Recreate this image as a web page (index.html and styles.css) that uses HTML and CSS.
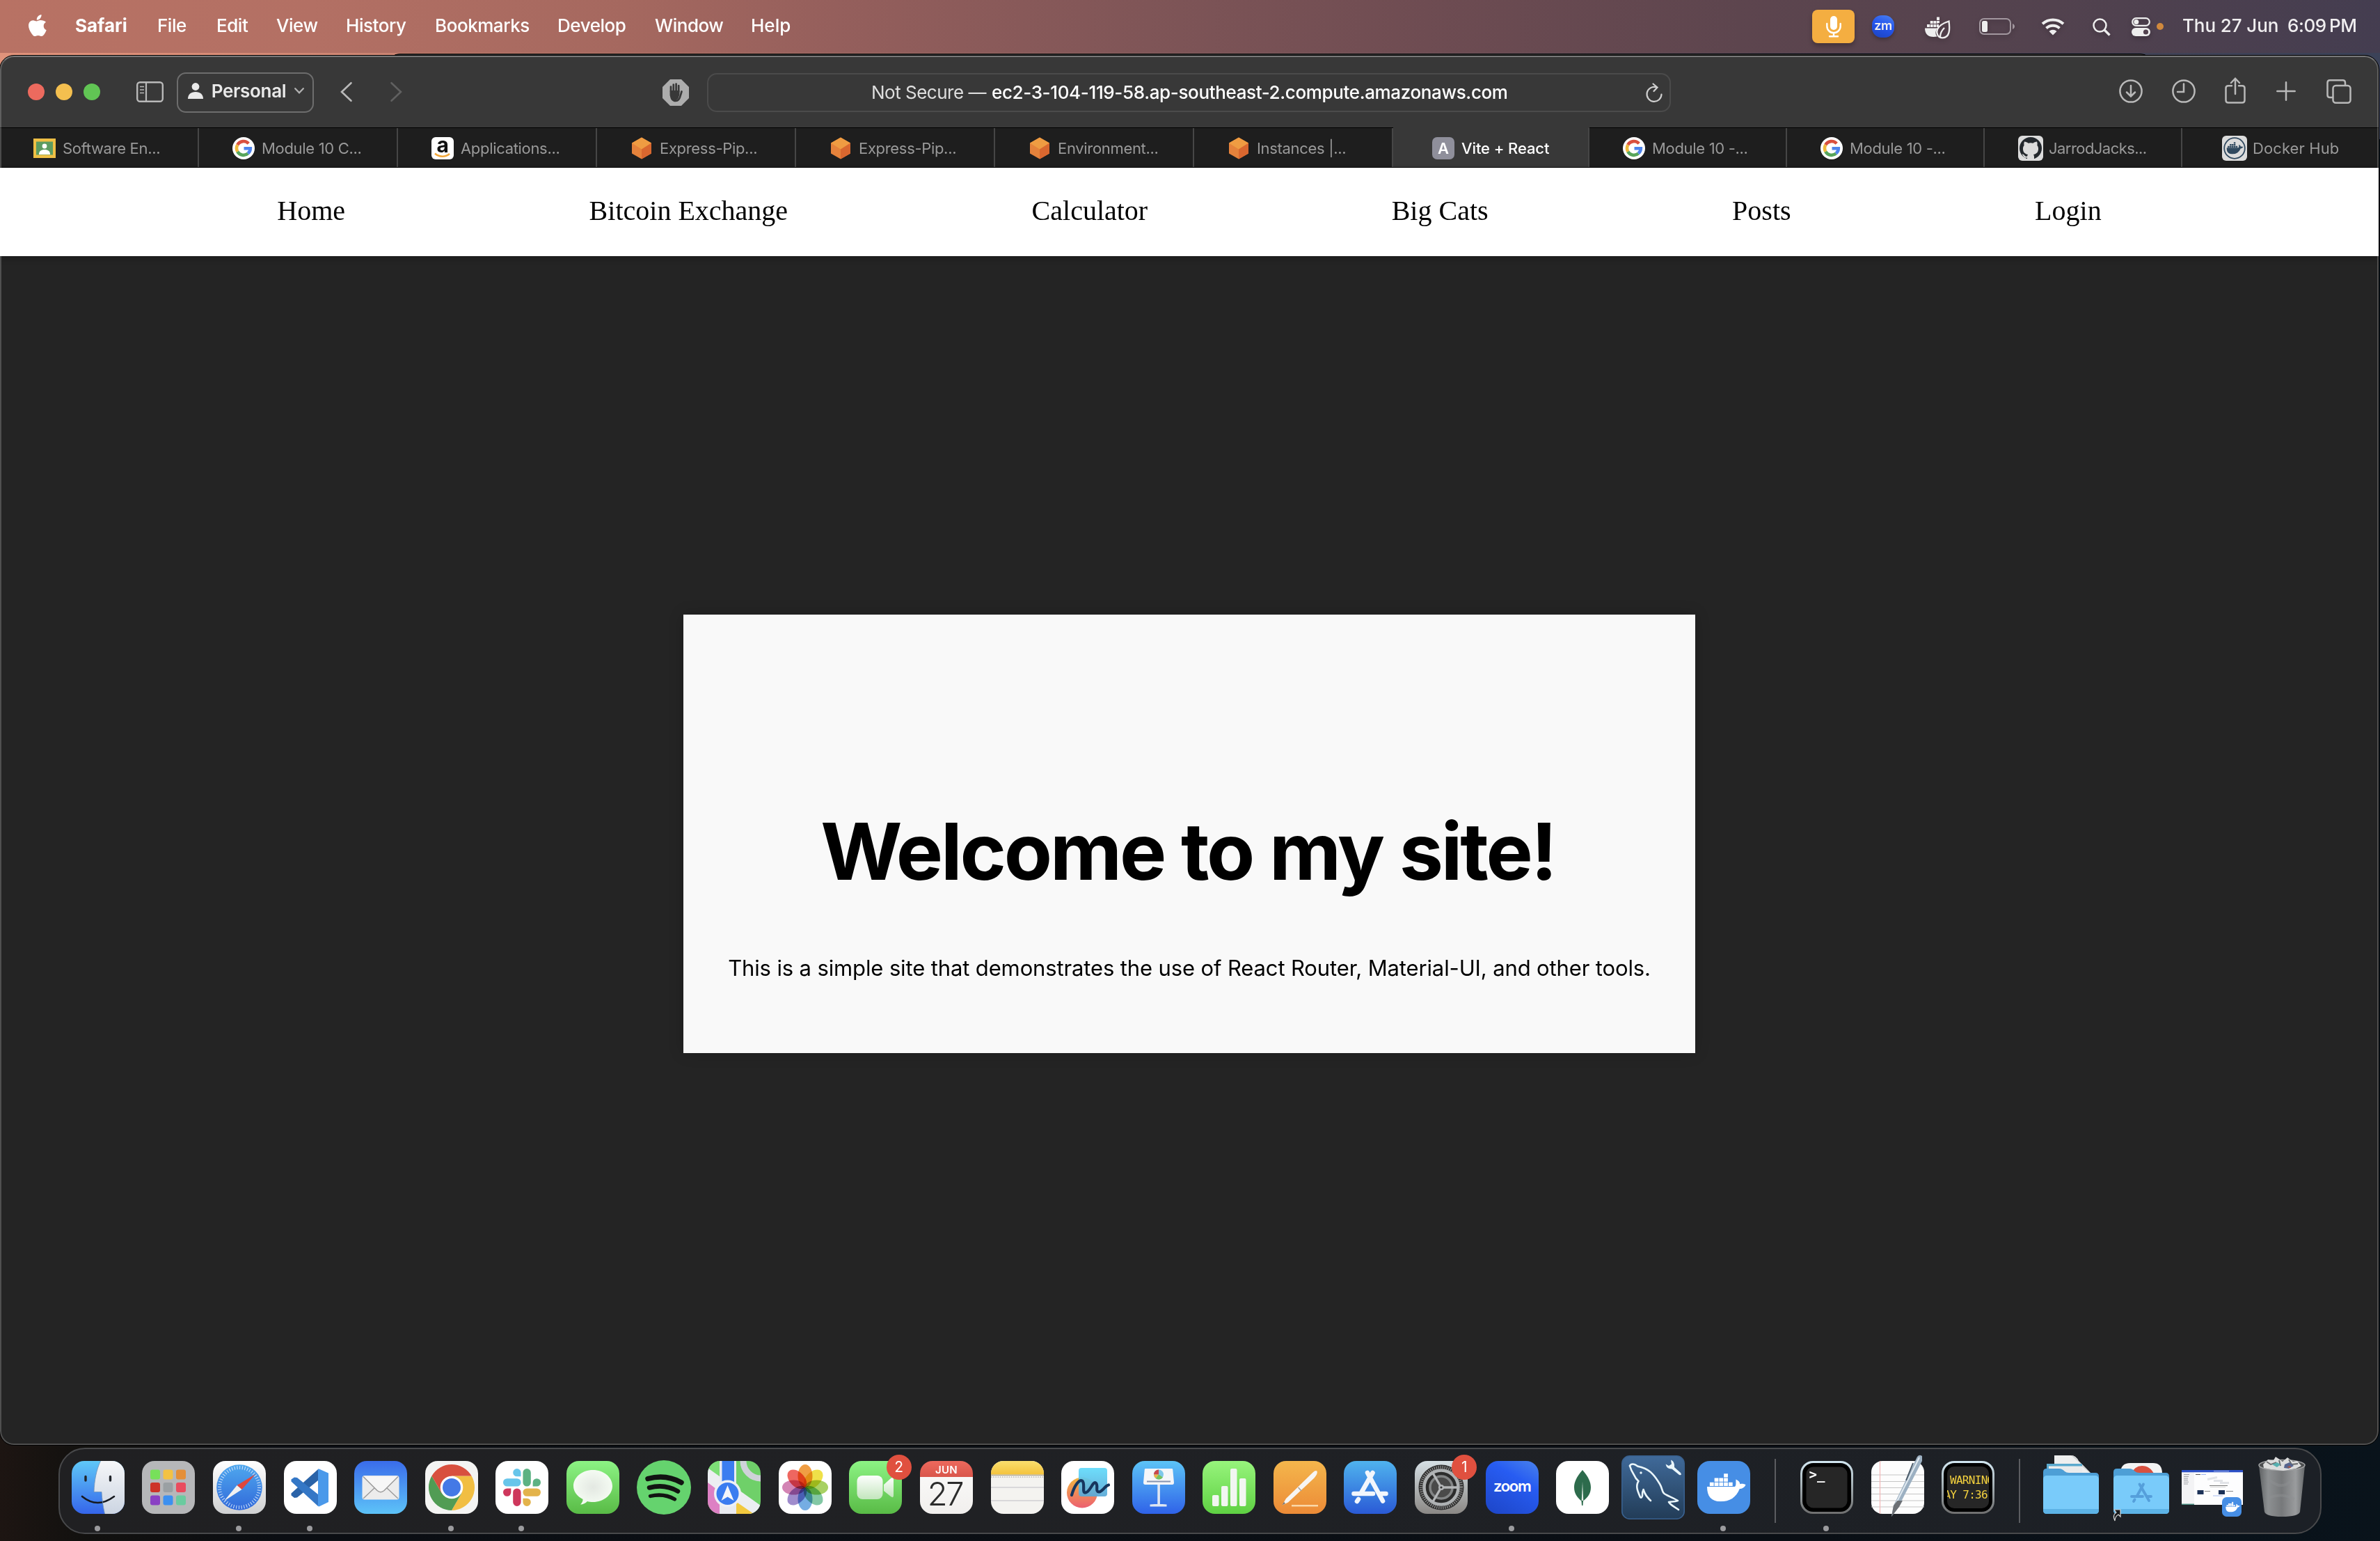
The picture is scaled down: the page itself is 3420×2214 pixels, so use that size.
FILE: index.html
```html
<!DOCTYPE html>
<html lang="en">
<head>
<meta charset="utf-8">
<title>Vite + React</title>
<link rel="stylesheet" href="styles.css">
</head>
<body>
<svg class="defs" width="0" height="0" aria-hidden="true">
  <defs>
    <symbol id="google" viewBox="0 0 32 32">
      <circle cx="16" cy="16" r="16" fill="#fff"/>
      <g fill="none" stroke-width="4.6">
        <path d="M23.2 9.2A9.9 9.9 0 0 0 7.3 11.2" stroke="#d9503f"/>
        <path d="M7.3 11.2A9.9 9.9 0 0 0 7.3 20.8" stroke="#f0b93d"/>
        <path d="M7.3 20.8A9.9 9.9 0 0 0 22.3 23.6" stroke="#57a55b"/>
        <path d="M22.3 23.6A9.9 9.9 0 0 0 25.8 16.2H16.5" stroke="#4e84ec"/>
      </g>
    </symbol>
    <symbol id="cube" viewBox="0 0 32 32">
      <path d="M16 0.5 30 8.5 V23.5 L16 31.5 2 23.5 V8.5Z" fill="#e5823b"/>
      <path d="M16 0.5 30 8.5 16 17.5 2 8.5Z" fill="#ef9c42"/>
      <path d="M16 17.5 30 8.5 V23.5 L16 31.5Z" fill="#d9672f"/>
    </symbol>
    <symbol id="whale" viewBox="0 0 58 42">
      <path d="M0 20H41C44 18.500 42.500 13 43 9C47 11 49 13 49 16C52 15 55 15.500 57.500 17C56 21 52 23 48.500 23C43 36 34 42 20 42C6 42 0 34 0 20Z"/>
      <path d="M4 13.500h6v5.500h-6zM11 13.500h6v5.500h-6zM18 13.500h6v5.500h-6zM25 13.500h6v5.500h-6zM32 13.500h6v5.500h-6zM11 7h6v5.500h-6zM18 7h6v5.500h-6zM25 7h6v5.500h-6zM25 0.500h6v5.500h-6z"/>
    </symbol>
    <linearGradient id="gFinder" x1="0" y1="0" x2="0" y2="1"><stop offset="0" stop-color="#5fc8f8"/><stop offset="1" stop-color="#3565ea"/></linearGradient>
    <linearGradient id="gFace" x1="0" y1="0" x2="0" y2="1"><stop offset="0" stop-color="#f5f6f8"/><stop offset="1" stop-color="#ccd5e2"/></linearGradient>
    <linearGradient id="gPaper" x1="0" y1="0" x2="0" y2="1"><stop offset="0" stop-color="#fff"/><stop offset="1" stop-color="#cfd0d1"/></linearGradient>
    <linearGradient id="gCompass" x1="0" y1="0" x2="0" y2="1"><stop offset="0" stop-color="#4fa8ee"/><stop offset="1" stop-color="#3169da"/></linearGradient>
    <linearGradient id="gSilver" x1="0" y1="0" x2="0" y2="1"><stop offset="0" stop-color="#e3e8ea"/><stop offset="1" stop-color="#707374"/></linearGradient>
    <linearGradient id="gMail" x1="0" y1="0" x2="0" y2="1"><stop offset="0" stop-color="#3a6cea"/><stop offset="1" stop-color="#5dc3f8"/></linearGradient>
    <linearGradient id="gSky" x1="0" y1="0" x2="0" y2="1"><stop offset="0" stop-color="#5cc4f7"/><stop offset="1" stop-color="#2f62e8"/></linearGradient>
    <linearGradient id="gStore" x1="0" y1="0" x2="0" y2="1"><stop offset="0" stop-color="#4fb3ee"/><stop offset="1" stop-color="#2a5ad6"/></linearGradient>
    <linearGradient id="gGreen" x1="0" y1="0" x2="0" y2="1"><stop offset="0" stop-color="#8cf384"/><stop offset="1" stop-color="#59bb46"/></linearGradient>
    <linearGradient id="gCamera" x1="0" y1="0" x2="0" y2="1"><stop offset="0" stop-color="#fdfefd"/><stop offset="1" stop-color="#c3e6bd"/></linearGradient>
    <radialGradient id="gBubble" cx=".5" cy=".5" r=".55"><stop offset="0" stop-color="#e3e8e2"/><stop offset="1" stop-color="#f6fdf4"/></radialGradient>
    <linearGradient id="gLime" x1="0" y1="0" x2="0" y2="1"><stop offset="0" stop-color="#97f47c"/><stop offset="1" stop-color="#5fd143"/></linearGradient>
    <linearGradient id="gOrange" x1="0" y1="0" x2="0" y2="1"><stop offset="0" stop-color="#f4b64c"/><stop offset="1" stop-color="#ec8b37"/></linearGradient>
    <linearGradient id="gYellow" x1="0" y1="0" x2="0" y2="1"><stop offset="0" stop-color="#fadf6e"/><stop offset="1" stop-color="#f4c33c"/></linearGradient>
    <linearGradient id="gSun" x1="0" y1="0" x2="0" y2="1"><stop offset="0" stop-color="#f3b63f"/><stop offset="1" stop-color="#ec6071"/></linearGradient>
    <linearGradient id="gCyan" x1="0" y1="0" x2="0" y2="1"><stop offset="0" stop-color="#62dbfb"/><stop offset="1" stop-color="#5ba8d6"/></linearGradient>
    <linearGradient id="gMetal" x1="0" y1="0" x2="0" y2="1"><stop offset="0" stop-color="#d6e0e5"/><stop offset="1" stop-color="#8b8885"/></linearGradient>
    <linearGradient id="gRim" x1="0" y1="0" x2="0" y2="1"><stop offset="0" stop-color="#d3e8f2"/><stop offset="1" stop-color="#6e6e6e"/></linearGradient>
    <linearGradient id="gSql" x1="0" y1="0" x2="0" y2="1"><stop offset="0" stop-color="#406a9a"/><stop offset="1" stop-color="#223c57"/></linearGradient>
    <linearGradient id="gCan" x1="0" y1="0" x2="1" y2="0"><stop offset="0" stop-color="#5e6163"/><stop offset=".2" stop-color="#8d9092"/><stop offset=".5" stop-color="#77797b"/><stop offset=".8" stop-color="#9a9c9e"/><stop offset="1" stop-color="#66696b"/></linearGradient>
    <clipPath id="tile"><rect width="76" height="76" rx="18"/></clipPath>
    <clipPath id="pane"><rect x="8" y="8" width="60" height="60" rx="10"/></clipPath>
  </defs>
</svg>

<div class="back-window"></div>

<header class="menubar">
  <svg class="apple" viewBox="0 0 26 31"><path fill="#fff" d="M18.500 0c.3 2.100-.6 4-1.800 5.400-1.200 1.400-3.100 2.400-4.900 2.200-.3-2 .7-4 1.800-5.200C14.800 1 16.900.1 18.500 0zM25 10.800c-2.400 1.500-3.300 3.500-3.300 5.700 0 2.600 1.500 4.800 4 5.800-.6 1.900-1.600 3.800-2.800 5.500-1.200 1.700-2.400 3.200-4.200 3.200-1.900 0-2.500-1.100-4.900-1.100-2.300 0-3.100 1.100-4.900 1.100S6 29.500 4.600 27.600C1.500 23.300 0 18.700 0 15.800 0 11 3.100 8.200 6.500 8.200c2 0 3.700 1.300 4.900 1.300 1.200 0 3.200-1.400 5.700-1.400 3.300 0 6.100 1 7.900 2.700z"/></svg>
  <nav class="menus">
    <span class="menu menu-app">Safari</span>
    <span class="menu">File</span>
    <span class="menu">Edit</span>
    <span class="menu">View</span>
    <span class="menu">History</span>
    <span class="menu">Bookmarks</span>
    <span class="menu">Develop</span>
    <span class="menu">Window</span>
    <span class="menu menu-help">Help</span>
  </nav>
  <div class="status">
    <span class="mic"><svg viewBox="0 0 22 31" width="22" height="31"><rect x="6" y="0" width="10" height="20" rx="5" fill="#fff"/><path d="M1.300 11v3.500a9.700 9.700 0 0 0 19.400 0V11M11 24.500V29M5 29.300h12" fill="none" stroke="#fff" stroke-width="2.400" stroke-linecap="round"/></svg></span>
    <span class="zm">zm</span>
    <svg class="shade st-docker" viewBox="0 0 36 32" width="36" height="32"><path fill="#eee" d="M3 11h4v4H3zM7.700 11h4v4h-4zM12.400 11h4v4h-4zM17 11h3v4h-3zM7.700 6h4v4h-4zM12.400 6h4v4h-4zM17 6h4v3l-4 1zM17 .5h4v4.500h-4zM0 16.500h18C15 20 14.500 25 17.500 28.500 6 30.500 0 26 0 16.500z"/><path d="M34.500 6.500C36 18 36 30 25.500 30.300 18 30 16 23 18 18c2.500-6 9-9 16.500-11.500zM22 29c0-5 2-9 6-13" fill="none" stroke="#eee" stroke-width="2.300"/></svg>
    <svg class="shade st-battery" viewBox="0 0 52 24" width="52" height="24"><rect x="1" y="1" width="44" height="22" rx="6" fill="none" stroke="#a2979f" stroke-width="2"/><rect x="4" y="4" width="8" height="16" rx="2.500" fill="#eee"/><path d="M48 8c4 1.500 4 6.500 0 8z" fill="#a2979f"/></svg>
    <svg class="shade st-wifi" viewBox="0 0 34 26" width="34" height="26"><path d="M2 9.300a22 22 0 0 1 30 0M7.500 15.500a14 14 0 0 1 19 0" fill="none" stroke="#eee" stroke-width="4"/><path d="M11.500 20a8 8 0 0 1 11 0L17 25.500z" fill="#eee"/></svg>
    <svg class="shade st-search" viewBox="0 0 26 26" width="26" height="26"><circle cx="10.500" cy="10.500" r="9" fill="none" stroke="#eee" stroke-width="2.500"/><path d="M17 17l7.500 7.500" stroke="#eee" stroke-width="3.400"/></svg>
    <svg class="shade st-control" viewBox="0 0 27 27" width="27" height="27"><rect x="1.200" y="1.200" width="24.600" height="10.600" rx="5.300" fill="none" stroke="#eee" stroke-width="2.200"/><circle cx="6.800" cy="6.500" r="3.500" fill="#eee"/><rect y="15" width="27" height="12" rx="6" fill="#eee"/><circle cx="20.500" cy="21" r="3.600" fill="#52424e"/></svg>
    <span class="rec"></span>
    <span class="clock"><span class="date">Thu 27 Jun</span><span class="time">6:09&#8201;PM</span></span>
  </div>
</header>

<main class="window">
  <div class="toolbar">
    <div class="lights"><i class="light close"></i><i class="light min"></i><i class="light max"></i></div>
    <svg class="sidebar-icon" viewBox="0 0 39 30" width="39" height="30" fill="none" stroke="#b9b9b9"><rect x="1.200" y="1.200" width="36.600" height="27.600" rx="4" stroke-width="2.400"/><path d="M14 1v28" stroke-width="2.200"/><path d="M5 7.500h6M5 12h6M5 16.500h6" stroke-width="1.600"/></svg>
    <button class="profile">
      <svg viewBox="0 0 22 23" width="22" height="23" fill="#e9e9e9"><circle cx="11" cy="5.500" r="5.400"/><path d="M0 23C0 16.500 4.500 13 11 13s11 3.500 11 10z"/></svg>
      <span class="profile-name">Personal</span>
      <svg viewBox="0 0 14 9" width="14" height="9"><path d="M1.200 1.200 7 7.400l5.800-6.200" fill="none" stroke="#b0b0b0" stroke-width="2.300" stroke-linecap="round"/></svg>
    </button>
    <svg class="back" viewBox="0 0 17 28" width="17" height="28"><path d="M15.500 1.200 2 14l13.500 12.800" fill="none" stroke="#b9b9b9" stroke-width="2.600" stroke-linecap="round"/></svg>
    <svg class="forward" viewBox="0 0 17 28" width="17" height="28"><path d="M1.500 1.200 15 14 1.500 26.800" fill="none" stroke="#606060" stroke-width="2.600" stroke-linecap="round"/></svg>
    <svg class="blocker" viewBox="0 0 38 38" width="38" height="38"><path d="M11 0h16l11 11v16L27 38H11L0 27V11z" fill="#adadad"/><path d="M12 19v-8.500M15.800 17V7.500M19.600 17V6.500M23.200 18V9M12 20c0 7 2 11 7 11 4.500 0 6-4 7-8.500l1.500-5" fill="none" stroke="#383838" stroke-width="2.700" stroke-linecap="round"/><path d="M10.800 16h13.600v6l-2 6-4 3-5-1.500-2.600-6z" fill="#383838"/></svg>
    <div class="address">
      <span class="insecure">Not Secure —</span><span class="host">ec2-3-104-119-58.ap-southeast-2.compute.amazonaws.com</span>
      <svg class="reload" viewBox="0 0 24 28" width="24" height="28" fill="none" stroke="#cfcfcf" stroke-width="2.200" stroke-linecap="round"><path d="M22.500 16.500A10.500 10.500 0 1 1 15 6.300M10.500 1.500l6 5-5 5.500"/></svg>
    </div>
    <div class="actions">
      <svg viewBox="0 0 34 34" width="34" height="34"><circle cx="17" cy="17" r="15.600"/><path d="M17 9v15M11 18.500l6 6 6-6"/></svg>
      <svg class="a-history" viewBox="0 0 34 34" width="34" height="34"><circle cx="17" cy="17" r="15.600"/><path d="M17 6.500V18H8"/></svg>
      <svg class="a-share" viewBox="0 0 30 38" width="30" height="38"><path d="M10 12.200H5Q1.500 12.200 1.500 15.500V33Q1.500 36.500 5 36.500H25Q28.500 36.500 28.500 33V15.500Q28.500 12.200 25 12.200H20M15 24V2M9 8l6-6.300L21 8"/></svg>
      <svg class="a-plus" viewBox="0 0 28 28" width="28" height="28"><path d="M14 1.300v25.400M1.300 14h25.400"/></svg>
      <svg class="a-tabs" viewBox="0 0 36 35" width="36" height="35"><rect x="9.500" y="9" width="25" height="24.700" rx="4"/><path d="M9 26H5Q1.500 26 1.500 22.500V5Q1.500 1.300 5 1.300H23.500Q27 1.300 27 5V8.500"/></svg>
    </div>
  </div>

  <div class="tabs">
    <div class="tab"><svg class="fav" viewBox="0 0 32 32"><path fill="#eebf45" d="M0 2h32v28H0z"/><path fill="#5c9c61" d="M4 6.500h24v19H4z"/><circle cx="16" cy="13" r="3.400" fill="#fff"/><path d="M8 25c0-5 3-7 8-7s8 2 8 7z" fill="#fff"/></svg><span class="tt">Software En...</span></div>
    <div class="tab"><svg class="fav"><use href="#google"/></svg><span class="tt">Module 10 C...</span></div>
    <div class="tab"><span class="fav amazon">a<svg viewBox="0 0 26 8" width="26" height="8"><path d="M2 1.500C8 7 17 7 23 2" fill="none" stroke="#f3a83b" stroke-width="2.600"/></svg></span><span class="tt">Applications...</span></div>
    <div class="tab"><svg class="fav"><use href="#cube"/></svg><span class="tt">Express-Pip...</span></div>
    <div class="tab"><svg class="fav"><use href="#cube"/></svg><span class="tt">Express-Pip...</span></div>
    <div class="tab"><svg class="fav"><use href="#cube"/></svg><span class="tt">Environment...</span></div>
    <div class="tab"><svg class="fav"><use href="#cube"/></svg><span class="tt">Instances |...</span></div>
    <div class="tab active"><span class="fav letter">A</span><span class="tt">Vite + React</span></div>
    <div class="tab narrow"><svg class="fav"><use href="#google"/></svg><span class="tt">Module 10 -...</span></div>
    <div class="tab narrow"><svg class="fav"><use href="#google"/></svg><span class="tt">Module 10 -...</span></div>
    <div class="tab narrow big-icon"><svg class="fav" viewBox="0 0 36 36"><rect width="36" height="36" rx="6" fill="#dcdcdc"/><circle cx="18" cy="18" r="16" fill="#23282d"/><path fill="#dcdcdc" d="M9 8.500c2 0 4 1 5.500 2.200a18 18 0 0 1 7 0C23 9.500 25 8.500 27 8.500c.8 2 .8 4 .3 5.300 1.400 1.700 1.900 3.600 1.700 6-.4 4.600-3.200 6.600-7 7.200.7.800 1 2 1 3.500V35H13v-3.500c-3.500.6-5-1-6-3-.5-1-1-1.300-1.500-1.800 2-.6 3 .6 4 2 .9 1.200 2 1.300 3.600.8.1-1.100.5-2 1-2.500-3.800-.6-6.700-2.600-7.100-7.200-.2-2.400.3-4.300 1.700-6C8.200 12.500 8.200 10.500 9 8.500z"/></svg><span class="tt tight">JarrodJacks...</span></div>
    <div class="tab narrow big-icon last"><svg class="fav" viewBox="0 0 36 36"><rect width="36" height="36" rx="6" fill="#dcdcdc"/><circle cx="18" cy="18" r="14.800" fill="none" stroke="#30495f" stroke-width="1.800"/><svg x="6.500" y="9" width="24" height="17.500" fill="#30495f"><use href="#whale"/></svg></svg><span class="tt">Docker Hub</span></div>
  </div>

  <section class="page">
    <nav class="site-nav">
      <a>Home</a><a>Bitcoin Exchange</a><a>Calculator</a><a>Big Cats</a><a>Posts</a><a>Login</a>
    </nav>
    <div class="stage">
      <article class="card">
        <h1>Welcome to my site!</h1>
        <p>This is a simple site that demonstrates the use of React Router, Material-UI, and other tools.</p>
      </article>
    </div>
  </section>
</main>

<footer class="dock">
  <div class="slot running"><svg class="app" viewBox="0 0 76 76"><g clip-path="url(#tile)"><rect width="76" height="76" fill="url(#gFinder)"/><path d="M41.500 0H76V76H47.500C45 65 43.500 55 43 44.500H32C32.500 28 35.500 13 41.500 0Z" fill="url(#gFace)"/></g><path d="M20 22.500v5.500M55.500 22.500v5.500" stroke="#20242a" stroke-width="3.400" stroke-linecap="round"/><path d="M15 51Q37 69 61 51" fill="none" stroke="#161a20" stroke-width="2.600" stroke-linecap="round"/><path d="M41.500 0C35.500 13 32.500 28 32 44.500H43C43.500 55 45 65 47.500 76" fill="none" stroke="#6f93b8" stroke-width=".8"/></svg></div>
  <div class="slot"><svg class="app" viewBox="0 0 76 76"><rect width="76" height="76" rx="18" fill="#b6b7b9"/><rect x="12" y="12.500" width="14" height="14" rx="3" fill="#77e05a"/><rect x="30.500" y="12.500" width="14" height="14" rx="3" fill="#f3c244"/><rect x="49" y="12.500" width="14" height="14" rx="3" fill="#e48f38"/><rect x="12" y="31" width="14" height="14" rx="3" fill="#cd3328"/><rect x="30.500" y="31" width="14" height="14" rx="3" fill="#9aa0a3"/><rect x="49" y="31" width="14" height="14" rx="3" fill="#e94c5e"/><rect x="12" y="49.500" width="14" height="14" rx="3" fill="#8a41c4"/><rect x="30.500" y="49.500" width="14" height="14" rx="3" fill="#3c90f0"/><rect x="49" y="49.500" width="14" height="14" rx="3" fill="#6acb9f"/></svg></div>
  <div class="slot running"><svg class="app" viewBox="0 0 76 76"><rect width="76" height="76" rx="18" fill="url(#gPaper)"/><circle cx="38" cy="38" r="32.800" fill="url(#gCompass)"/><circle cx="38" cy="38" r="28.500" fill="none" stroke="#cfe3fa" stroke-width="5" stroke-dasharray="1 2.730"/><path d="M61 19 41.500 41 34.500 35Z" fill="#e0473d"/><path d="M16 57.500 34.500 35 41.500 41Z" fill="#f1f1f1"/></svg></div>
  <div class="slot running"><svg class="app" viewBox="0 0 76 76"><rect width="76" height="76" rx="18" fill="#fff"/><path d="M49 12 10.500 46.500V49.500L15 53 19 52.500 49 28Z" fill="#2a63a8"/><path d="M49 65 10.500 29.500V26.500L15 23.500 19 24 49 48Z" fill="#3477c6"/><path d="M49 11.500 50.500 11.500 64 17.500V59L50.500 65.500 49 65Z" fill="#4a99ea"/></svg></div>
  <div class="slot"><svg class="app" viewBox="0 0 76 76"><rect width="76" height="76" rx="18" fill="url(#gMail)"/><rect x="11.500" y="21" width="53" height="34.500" rx="3.500" fill="#ececec"/><path d="M13 54 30 38M63 54 46 38" stroke="#9c9c9c" stroke-width="1.400"/><path d="M13 22.500 33 42.500Q38 47 43 42.500L63 22.500" fill="#f7f7f7" stroke="#9a9a9a" stroke-width="1.500"/></svg></div>
  <div class="slot running"><svg class="app" viewBox="0 0 76 76"><rect width="76" height="76" rx="18" fill="#f4f4f3"/><path d="M66.600 21.500H38V38L52.300 46.200 38 71A33 33 0 0 0 66.600 21.500Z" fill="#f1be42"/><path d="M9.400 21.500 23.700 46.200 38 38 52.300 46.200 38 71A33 33 0 0 1 9.400 21.500Z" fill="#519c54"/><path d="M9.400 21.500A33 33 0 0 1 66.600 21.500H38V38L23.700 46.200Z" fill="#d8503f"/><circle cx="38" cy="38" r="16.300" fill="#fff"/><circle cx="38" cy="38" r="13" fill="#4479e6"/></svg></div>
  <div class="slot running"><svg class="app" viewBox="0 0 76 76"><rect width="76" height="76" rx="18" fill="#fff"/><g transform="translate(11 11) scale(2.250)"><path fill="#ce375c" d="M5.042 15.165a2.528 2.528 0 0 1-2.520 2.523A2.528 2.528 0 0 1 0 15.165a2.527 2.527 0 0 1 2.522-2.520h2.520v2.520zM6.313 15.165a2.527 2.527 0 0 1 2.521-2.520 2.527 2.527 0 0 1 2.521 2.520v6.313A2.528 2.528 0 0 1 8.834 24a2.528 2.528 0 0 1-2.521-2.522v-6.313z"/><path fill="#67c5ea" d="M8.834 5.042a2.528 2.528 0 0 1-2.521-2.520A2.528 2.528 0 0 1 8.834 0a2.528 2.528 0 0 1 2.521 2.522v2.520H8.834zM8.834 6.313a2.528 2.528 0 0 1 2.521 2.521 2.528 2.528 0 0 1-2.521 2.521H2.522A2.528 2.528 0 0 1 0 8.834a2.528 2.528 0 0 1 2.522-2.521h6.312z"/><path fill="#5cb283" d="M18.956 8.834a2.528 2.528 0 0 1 2.522-2.521A2.528 2.528 0 0 1 24 8.834a2.528 2.528 0 0 1-2.522 2.521h-2.522V8.834zM17.688 8.834a2.528 2.528 0 0 1-2.523 2.521 2.527 2.527 0 0 1-2.520-2.521V2.522A2.527 2.527 0 0 1 15.165 0a2.528 2.528 0 0 1 2.523 2.522v6.312z"/><path fill="#e3b34b" d="M15.165 18.956a2.528 2.528 0 0 1 2.523 2.522A2.528 2.528 0 0 1 15.165 24a2.527 2.527 0 0 1-2.520-2.522v-2.522h2.520zM15.165 17.688a2.527 2.527 0 0 1-2.520-2.523 2.526 2.526 0 0 1 2.520-2.520h6.313A2.527 2.527 0 0 1 24 15.165a2.528 2.528 0 0 1-2.522 2.523h-6.313z"/></g></svg></div>
  <div class="slot"><svg class="app" viewBox="0 0 76 76"><rect width="76" height="76" rx="18" fill="url(#gGreen)"/><path d="M38 13C53.500 13 66 23.300 66 36S53.500 59 38 59C35 59 32.500 58.700 30 58 27 61 24 62.300 20 62.500 22.500 60 23.700 57.500 23.500 55 15.500 51 10 44 10 36 10 23.300 22.500 13 38 13Z" fill="url(#gBubble)"/></svg></div>
  <div class="slot"><svg class="app spotify" viewBox="0 0 78 78"><circle cx="39" cy="39" r="39" fill="#65d36e"/><g fill="none" stroke="#121412" stroke-linecap="round"><path d="M16 26.500Q42 19.500 64 32" stroke-width="7.500"/><path d="M18 39.500Q40 33.500 59 44.500" stroke-width="6.500"/><path d="M19.500 51.500Q39 47 54.500 56" stroke-width="5.300"/></g></svg></div>
  <div class="slot"><svg class="app" viewBox="0 0 76 76"><g clip-path="url(#tile)"><rect width="76" height="76" fill="#6fd069"/><path d="M0 30 17 43V76H0Z" fill="#dd80c4"/><path d="M0 0H17V22L0 10Z" fill="#7ddf77"/><path d="M0 10 76 64V88L0 31Z" fill="#eceef2"/><path d="M40 58 66 76H40Z" fill="#f2c93f"/><path d="M17 0H41V76H17Z" fill="#e9ebf0"/><path d="M20.500 0H38V32H20.500Z" fill="#3c7df0"/><circle cx="76" cy="0" r="25" fill="none" stroke="#cfd2d9" stroke-width="9"/></g><circle cx="28.500" cy="47" r="19.500" fill="#eef0f5"/><circle cx="28.500" cy="47" r="16" fill="#3a7cf0"/><path d="M28.500 35 37.500 57 28.500 51.500 19.500 57Z" fill="#f4f6fa"/></svg></div>
  <div class="slot"><svg class="app" viewBox="0 0 76 76"><rect width="76" height="76" rx="18" fill="#fff"/><g class="petals"><ellipse cx="38" cy="21.500" rx="10.500" ry="16.500" fill="#f0993a"/><ellipse cx="38" cy="21.500" rx="10.500" ry="16.500" fill="#efe03f" transform="rotate(45 38 38)"/><ellipse cx="38" cy="21.500" rx="10.500" ry="16.500" fill="#a3cf5a" transform="rotate(90 38 38)"/><ellipse cx="38" cy="21.500" rx="10.500" ry="16.500" fill="#7cc5a0" transform="rotate(135 38 38)"/><ellipse cx="38" cy="21.500" rx="10.500" ry="16.500" fill="#6ea9e2" transform="rotate(180 38 38)"/><ellipse cx="38" cy="21.500" rx="10.500" ry="16.500" fill="#9a86c9" transform="rotate(225 38 38)"/><ellipse cx="38" cy="21.500" rx="10.500" ry="16.500" fill="#d17db0" transform="rotate(270 38 38)"/><ellipse cx="38" cy="21.500" rx="10.500" ry="16.500" fill="#ee5f57" transform="rotate(315 38 38)"/></g></svg></div>
  <div class="slot"><svg class="app" viewBox="0 0 76 76"><rect width="76" height="76" rx="18" fill="url(#gGreen)"/><rect x="11.500" y="21" width="37" height="34" rx="8" fill="url(#gCamera)"/><path d="M50 34 60 25Q64 22 64 27V49Q64 54 60 51L50 43Z" fill="url(#gCamera)"/></svg><span class="badge">2</span></div>
  <div class="slot"><div class="app calendar"><span class="month">JUN</span><span class="day">27</span></div></div>
  <div class="slot"><svg class="app" viewBox="0 0 76 76"><g clip-path="url(#tile)"><rect width="76" height="76" fill="#f4f3f0"/><rect width="76" height="19.500" fill="url(#gYellow)"/><path d="M0 20.300h76" stroke="#a9a08a" stroke-width="1.300"/><path d="M0 23h76" stroke="#c4c2bd" stroke-width="2" stroke-dasharray="1.500 1.700"/><path d="M0 38h76M0 57h76" stroke="#d0d0d2" stroke-width="1.600"/></g></svg></div>
  <div class="slot"><svg class="app" viewBox="0 0 76 76"><rect width="76" height="76" rx="18" fill="#fff"/><circle cx="30" cy="45.500" r="22" fill="url(#gSun)"/><rect x="25" y="10" width="41" height="41" rx="4" fill="url(#gCyan)" opacity=".93"/><path d="M15 49C19 35 26 26 30 28.500 35 32 29 46 35 45.500 42 44 45 29 49.500 31.500 54 35 48 44 54 44.500 60 44 62 36 68 34.500" fill="none" stroke="#17365e" stroke-width="4.200" stroke-linecap="round"/></svg></div>
  <div class="slot"><svg class="app" viewBox="0 0 76 76"><rect width="76" height="76" rx="18" fill="url(#gSky)"/><path d="M36.300 33h3.600v30h-3.600zM25.500 62.500q12.500-1.500 24 0v3h-24z" fill="#dfe6f2"/><path d="M19 11H57Q58 11 58.200 12L60 31Q60 34 57.500 34H18.500Q16 34 16 31L17.800 12Q18 11 19 11Z" fill="#f4f6f9"/><path d="M21 29.500H55" stroke="#8694b0" stroke-width="2"/><circle cx="38" cy="19.500" r="7" fill="#7ec8ea"/><path d="M38 19.500V12.500A7 7 0 0 0 31 19.500Z" fill="#c9484c"/><path d="M38 19.500H31A7 7 0 0 0 34 25Z" fill="#eeb544"/><path d="M38 19.500 34 25.200A7 7 0 0 0 44 23.500Z" fill="#76c25e"/></svg></div>
  <div class="slot"><svg class="app" viewBox="0 0 76 76"><rect width="76" height="76" rx="18" fill="url(#gLime)"/><g fill="#f2f6f1"><rect x="14" y="49" width="9.500" height="16" rx="2"/><rect x="27" y="36" width="9.500" height="29" rx="2"/><rect x="40" y="11" width="9.500" height="54" rx="2"/><rect x="53" y="25" width="9.500" height="40" rx="2"/></g></svg></div>
  <div class="slot"><svg class="app" viewBox="0 0 76 76"><rect width="76" height="76" rx="18" fill="url(#gOrange)"/><path d="M26 64.300h38" stroke="#fad7a8" stroke-width="2.400"/><path d="M62.500 14.500Q60 12.500 56 17L18 54 12.500 63.500 21 59.500 58.500 24.500Q64 18 62.500 14.500Z" fill="#f7f5f2"/><path d="M35.500 38l4.500 5" stroke="#a8a29b" stroke-width="1.600"/><path d="M12.500 63.500l2.500-4.500 2 2z" fill="#75716c"/></svg></div>
  <div class="slot"><svg class="app" viewBox="0 0 76 76"><rect width="76" height="76" rx="18" fill="url(#gStore)"/><g stroke="#f2f6fc" stroke-width="6.600" stroke-linecap="round" fill="none"><path d="M41.500 17 25.500 45M34 17 56 57.500M14.500 47H42M54 47H60.500M21 55 19 58"/></g></svg></div>
  <div class="slot"><svg class="app" viewBox="0 0 76 76"><rect width="76" height="76" rx="18" fill="url(#gMetal)"/><circle cx="38" cy="38" r="32.500" fill="#2c2c2c"/><circle cx="38" cy="38" r="29" fill="none" stroke="#8c8c8c" stroke-width="4.500" stroke-dasharray="1.300 1.700"/><circle cx="38" cy="38" r="24.500" fill="none" stroke="#aeb1b3" stroke-width="4.500"/><circle cx="38" cy="38" r="16" fill="#4a4a4a" stroke="#828485" stroke-width="3.500"/><path d="M38 38H62M38 38 26 17.500M38 38 26 58.500" stroke="#b4b6b8" stroke-width="3.400"/><circle cx="38" cy="38" r="4" fill="#b4b6b8"/><circle cx="38" cy="38" r="1.600" fill="#333"/></svg><span class="badge">1</span></div>
  <div class="slot running"><div class="app zoom">zoom</div></div>
  <div class="slot"><svg class="app" viewBox="0 0 76 76"><rect width="76" height="76" rx="18" fill="#fff"/><path d="M38 13C47 23 50 31 50 38 50 47 45 53 39 57.500L38.500 64H37L36.500 57.500C31 53 26 47 26 38 26 31 29 23 38 13Z" fill="#2d6b4c"/><path d="M38 30 39.300 57H36.700Z" fill="#dfe9e2"/></svg></div>
  <div class="slot"><svg class="app mysql" viewBox="0 0 91 92"><rect x=".8" y=".8" width="89.400" height="90.400" rx="11" fill="url(#gSql)" stroke="#39618f" stroke-width="1.600"/><g fill="none" stroke="#eaf6fb" stroke-width="2.600" stroke-linecap="round" stroke-linejoin="round"><path d="M12 15Q14 11 20 13.500C24 17 27 16 30 17.500 42 21 49 31 55 41 60 49 57 54 65 57 71 60 76 62 81 65 76 67 72 66 68 67 71 72 77 74 82 78"/><path d="M12 15Q14 22 18 28 20 33 24.500 37C20 44 23 51 27 60Q29 62 30 58 29.500 53 31.500 49C34 57 37 60 42 65"/></g><circle cx="28" cy="25" r="1.700" fill="#eaf6fb"/><path d="M71 6.500Q77 9 76 17L85 25Q87.500 29 83 28L72.500 19.500Q65 20 63.500 12.500L68 15 72 12.500Z" fill="#eaf6fb"/></svg></div>
  <div class="slot running"><svg class="app" viewBox="0 0 76 76"><rect width="76" height="76" rx="18" fill="#468ee5"/><svg x="14" y="17.500" width="56" height="41" fill="#fff"><use href="#whale"/></svg></svg></div>
  <i class="divider"></i>
  <div class="slot running"><svg class="app" viewBox="0 0 76 76"><rect width="76" height="76" rx="18" fill="url(#gRim)"/><rect x="3" y="3" width="70" height="70" rx="15.500" fill="#000"/><rect x="8.500" y="8.500" width="59" height="59" rx="10" fill="#262626"/><text x="12.500" y="26" class="prompt">&gt;_</text></svg></div>
  <div class="slot"><svg class="app" viewBox="0 0 76 76"><rect width="76" height="76" rx="16" fill="#fdfdfd"/><path d="M0 20h76M0 29.500h76M0 38.500h76M0 47.500h76M0 57h76M0 66h76" stroke="#c6c6c6" stroke-width="1.200"/><path d="M12.500 0v76" stroke="#f3b6b6" stroke-width="1.200"/><path d="M66-6Q69-10 73-7L73 0 38 68 29 80 32 64Z" fill="#9cb0c2"/><path d="M69-5 34 64" stroke="#e0e9f0" stroke-width="2"/><path d="M37.500 57 32 64 29 80 40 66 45 57Z" fill="#6c7075"/><path d="M60 3 50 28" stroke="#4b5a68" stroke-width="2"/></svg></div>
  <div class="slot"><svg class="app" viewBox="0 0 76 76"><rect width="76" height="76" rx="18" fill="url(#gRim)"/><rect x="3" y="3" width="70" height="70" rx="15.500" fill="#000"/><rect x="8" y="8" width="60" height="60" rx="10" fill="#262626"/><g clip-path="url(#pane)" class="log"><text x="12" y="33">WARNING</text><text x="-5.500" y="54">DAY 7:36</text></g></svg></div>
  <i class="divider"></i>
  <div class="slot"><svg class="app folder" viewBox="0 0 80 84"><path d="M16 0H40Q47 0 51 8L69 26V40H16Z" fill="#eeefef"/><path d="M40 0Q47 0 50 8 56 12 69 27L56 16V14Z" fill="#d3d5d6"/><path d="M5 12H56V40H5Z" fill="#5aa9cd"/><path d="M8 15.500H56V40H8Z" fill="#e9ebec"/><path d="M0 24Q0 19 5 19H23Q27 19 31 23 33 25 37 25H75Q80 25 80 30V60H0Z" fill="#4d9fd6"/><rect y="29" width="80" height="55" rx="5" fill="#79cbfa"/><path d="M0 77H80V79Q80 84 75 84H5Q0 84 0 79Z" fill="#5db3e6"/></svg></div>
  <div class="slot"><svg class="app folder" viewBox="0 0 80 84"><path d="M10 26Q10 11 24 11H57Q70 11 70 26V40H10Z" fill="#f3f3f3"/><path d="M24 28Q30 15 41 15 53 15 59 28Z" fill="#d8503f"/><path d="M0 24Q0 19 5 19H23Q27 19 31 23 33 25 37 25H75Q80 25 80 30V60H0Z" fill="#4d9fd6"/><rect y="29" width="80" height="55" rx="5" fill="#79cbfa"/><path d="M0 77H80V79Q80 84 75 84H5Q0 84 0 79Z" fill="#5db3e6"/><g stroke="#559fdb" stroke-width="3.800" stroke-linecap="round" fill="none"><path d="M43 41.500 34 58M37.500 41.500 51 65M26 59H42M49 59H54M30.500 63.500 29 66"/></g></svg><svg class="alias" viewBox="0 0 14 18" width="14" height="18"><path d="M3 1H12V11L9 8Q4 11 4 17 0 9 6 5Z" fill="#16181b" stroke="#d8d8d8" stroke-width="1.200"/></svg></div>
  <div class="slot"><svg class="app shot" viewBox="0 0 88 50"><path fill="#fdfdfe" d="M0 0h88v50H0z"/><path fill="#f3f3f5" d="M0 3h18v45H0z"/><path fill="#2b4fc6" d="M0 0h88v3.200H0z"/><path fill="#8da4e6" d="M46 1h22v1.200H46z"/><path d="M3 6.500h8M3 9.300h7M3 12h6M3 14.500h6M3 17.200h7M3 20h6" stroke="#9a9da3"/><path d="M20 6.500h7" stroke="#555"/><path d="M28 6.500h7" stroke="#9cb3ee"/><path d="M37 13.500l14-3M46 15.500h13M55 18.500h13" stroke="#e2e4e8" stroke-width="3"/><path d="M40 22.500h26" stroke="#777"/><path d="M41 24.500h22" stroke="#ccc" stroke-width=".8"/><path fill="#1c3157" d="M22.500 29h9v6h-9zM53 29h9v6h-9z"/><path d="M33 30.500h8M64 30.500h10" stroke="#888"/><path d="M45 37h14" stroke="#a9bdf0"/><path fill="#4a8f83" d="M0 48.500h18V50H0z"/></svg><svg class="mini" viewBox="0 0 76 76"><rect width="76" height="76" rx="18" fill="#468ee5"/><svg x="14" y="17.500" width="56" height="41" fill="#fff"><use href="#whale"/></svg></svg></div>
  <div class="slot"><svg class="app trash" viewBox="0 0 68 88"><path d="M1 14H67L60 80Q58 87 34 87 11 87 9 80Z" fill="url(#gCan)"/><ellipse cx="34" cy="13" rx="33" ry="7.500" fill="#4b4d4f" stroke="#a0a2a4" stroke-width="1.600"/><path d="M7 12 14 5 22 6 25 1 31 5 35 8 42 2 50 8 56 7 62 14 54 18 36 21 18 19 8 17Z" fill="#dcdddd"/><path d="M12 8 18 12 26 9M44 5 48 12 57 11M30 6 32 14" stroke="#66686a" stroke-width="1.800" fill="none"/><path d="M20 12 27 9 32 12 27 16Z" fill="#57b0b0"/><path d="M38 12 45 9 51 14 44 18 37 17Z" fill="#55648e"/><path d="M41 16l5-2 1 3z" fill="#b3563e"/><path d="M17 35Q34 50 49 34M15 60Q34 52 52 62" stroke="#8e9193" stroke-width="4" fill="none" opacity=".45"/></svg></div>
</footer>
</body>
</html>
```
FILE: styles.css
```css
* { box-sizing: border-box; }

body {
  margin: 0;
  width: 3420px;
  height: 2214px;
  overflow: hidden;
  position: relative;
  display: flex;
  flex-direction: column;
  font-family: Inter, "Liberation Sans", sans-serif;
  background:
    linear-gradient(90deg, #e0937b 0, #d98d77 300px, #b97a6c 900px, #4c4454 2600px, #3b4258 3420px) 0 0 / 100% 200px no-repeat,
    linear-gradient(90deg, #1d1512 0, #12110f 120px, #0b0e13 400px, #0a0f15 2600px, #09131b 3420px);
}

svg { display: block; overflow: visible; flex: none; }
.defs { position: absolute; }

/* menu bar */
.menubar {
  position: relative;
  flex: none;
  height: 76px;
  padding: 0 34px 0 41px;
  display: flex;
  align-items: center;
  color: #fff;
  font-size: 26px;
  font-weight: 500;
  background: linear-gradient(90deg, #b87264 0, #b37064 450px, #a5685f 900px, #955f5c 1200px, #7f5557 1650px, #6e4c52 2050px, #5d454e 2500px, #52424e 2950px, #443d50 3420px);
}
.apple { width: 26px; height: 31px; margin-top: -3px; }
.menus {
  display: grid;
  grid-template-columns: 118px 85px 86px 100px 128px 176px 140px 138px 80px;
  margin-left: 41px;
  line-height: 32px;
  margin-top: -3px;
  white-space: nowrap;
}
.menu { letter-spacing: -.45px; }
.menu-app { font-weight: 700; letter-spacing: 0; }
.menu-help { letter-spacing: 0; }
.status { margin-left: auto; display: flex; align-items: center; color: #f0eef0; }
.shade { filter: drop-shadow(0 3px 3px rgba(0, 0, 0, .22)); }
.mic {
  width: 61px; height: 48px; border-radius: 8px; background: #f4ae41;
  display: flex; align-items: center; justify-content: center;
  box-shadow: 0 4px 6px rgba(0, 0, 0, .25);
}
.zm {
  width: 32px; height: 32px; border-radius: 14px; margin-left: 25px;
  background: linear-gradient(200deg, #4c82ee, #2556ee 45%, #1c43be);
  font-size: 18px; font-weight: 600; line-height: 29px; text-align: center; letter-spacing: -.5px;
  box-shadow: 0 3px 5px rgba(0, 0, 0, .25);
}
.st-docker { margin-left: 44px; margin-top: 3px; }
.st-battery { margin-left: 42px; }
.st-wifi { margin-left: 37px; }
.st-search { margin-left: 40px; margin-top: 1px; }
.st-control { margin-left: 30px; }
.rec { width: 10px; height: 10px; border-radius: 50%; background: #d0893d; margin-left: 9px; }
.clock { width: 250px; margin-left: 27px; margin-top: -3px; display: grid; grid-template-columns: 151px 99px; white-space: nowrap; line-height: 32px; }
.date { letter-spacing: -.1px; }
.time { letter-spacing: -.4px; }

/* window peeking out behind the browser */
.back-window {
  position: absolute; left: 558px; top: 77px; width: 2534px; height: 40px;
  border-radius: 16px; background: #3a3a3a; border: 1px solid #000;
}

/* browser window */
.window {
  position: relative;
  flex: none;
  width: 3418px;
  height: 1996px;
  margin-top: 4px;
  border-radius: 20px;
  overflow: hidden;
  background: #242424;
  display: flex;
  flex-direction: column;
  outline: 1px solid #000;
}
.window::after {
  content: ""; position: absolute; inset: 0; border-radius: 20px;
  border: 2px solid rgba(255, 255, 255, .2); border-top-color: rgba(255, 255, 255, .32);
}
.toolbar { flex: none; height: 103px; background: #383838; display: flex; align-items: center; padding: 2px 39px 0 40px; }
.lights { display: flex; gap: 16px; margin-top: -1px; }
.light { width: 24px; height: 24px; border-radius: 50%; }
.close { background: #ec6a5e; }
.min { background: #f4bf4f; }
.max { background: #61c554; }
.sidebar-icon { margin-left: 52px; margin-top: -2px; }
.profile {
  width: 197px; height: 58px; margin: 0 0 0 19px; padding: 0 12px 0 14px;
  border: 2px solid #6d6d6d; border-radius: 13px; background: none;
  display: flex; align-items: center; justify-content: space-between;
  font: 600 26px/30px Inter, sans-serif; color: #e9e9e9;
}
.profile svg, .profile-name { position: relative; top: -2px; }
.profile-name { letter-spacing: -.3px; }
.back { margin-left: 38px; margin-top: -2px; }
.forward { margin-left: 55px; margin-top: -2px; }
.blocker { margin-left: 374px; }
.address {
  width: 1385px; height: 56px; margin-left: 26px; padding: 0 10px 0 234px;
  border: 2px solid #4b4b4b; border-radius: 14px;
  display: flex; align-items: center; white-space: nowrap;
  font-size: 26px; color: #fff;
}
.insecure { width: 173px; color: #dedede; letter-spacing: -.5px; }
.host { font-weight: 500; letter-spacing: -.36px; }
.reload { margin-left: auto; }
.actions { margin-left: auto; display: flex; align-items: center; margin-top: -3px; }
.actions svg { fill: none; stroke: #b9b9b9; stroke-width: 2.500; stroke-linecap: round; }
.a-history { margin-left: 42px; }
.a-share { margin-left: 42px; margin-top: -3px; }
.a-plus { margin-left: 44px; margin-top: -1px; }
.a-tabs { margin-left: 44px; }

.tabs { flex: none; display: flex; height: 58px; background: #1e1e1e; }
.tab {
  width: 286px; height: 58px; padding: 1px 0 0 48px; display: flex; align-items: center;
  font-size: 22px; color: #999; white-space: nowrap; letter-spacing: -.32px;
  border-top: 1px solid #000; border-bottom: 1px solid #000;
  box-shadow: inset -2px 0 #464646;
}
.tab.narrow { width: 284px; }
.tab.active { width: 282px; background: #383838; color: #fff; font-weight: 500; padding-left: 56px; border-top-color: #383838; letter-spacing: -.1px; }
.tab.last { width: 282px; padding-left: 57px; box-shadow: none; letter-spacing: .1px; }
.tight { letter-spacing: -.55px; }
.fav { width: 32px; height: 32px; margin-right: 10px; }
.big-icon .fav { width: 36px; height: 36px; margin-right: 8px; }
.amazon {
  border-radius: 6px; background: #fff; color: #111; font-weight: 700; font-size: 30px; line-height: 22px;
  display: flex; flex-direction: column; align-items: center;
}
.letter { border-radius: 7px; background: #8f8f9b; text-align: center; font-size: 22px; line-height: 32px; font-weight: 600; }

/* page */
.page { flex: 1; display: flex; flex-direction: column; background: #242424; }
.site-nav {
  flex: none; height: 127px; padding-bottom: 4px; background: #fff; display: flex; justify-content: center; align-items: center; gap: 350.500px;
  font: 40px/46px "Liberation Serif", serif; color: #000;
  box-shadow: 0 4px 8px rgba(0, 0, 0, .25);
}
.stage { flex: 1; padding-top: 515px; }
.card {
  width: 1454px; height: 630px; margin: 0 auto; background: #f9f9f9; color: #000;
  text-align: center; padding-top: 272px; box-shadow: 0 0 20px rgba(0, 0, 0, .2);
}
.card h1 { margin: 0; padding-right: 4px; font-size: 113px; line-height: 136px; font-weight: 700; white-space: nowrap; letter-spacing: -3.100px; }
.card p { margin: 80px 0 0; font-size: 31px; line-height: 40px; white-space: nowrap; letter-spacing: -.13px; }

/* dock */
.dock {
  flex: none; width: 3252px; height: 124px; margin: 4px 0 0 84px; padding-left: 4px;
  border: 2px solid #48494b; border-radius: 38px;
  background: linear-gradient(90deg, #202022, #202124 40%, #1c2026);
  display: flex; position: relative;
}
.slot { position: relative; flex: none; width: 101.600px; display: flex; justify-content: center; align-items: flex-start; padding-top: 17px; }
.running::after {
  content: ""; position: absolute; left: calc(50% - 5px); top: 110px; width: 8px; height: 8px; border-radius: 50%; background: #9b9b9e;
}
.app { width: 76px; height: 76px; border-radius: 18px; flex: none; }
.spotify { width: 78px; height: 78px; margin-top: -1px; }
.mysql { width: 91px; height: 92px; margin-top: -8px; border-radius: 0; }
.folder { width: 80px; height: 84px; margin-top: -8px; }
.shot { width: 88px; height: 50px; margin-top: 13px; border-radius: 0; }
.trash { width: 68px; height: 88px; margin: -7px 4px 0 0; }
.petals ellipse { mix-blend-mode: multiply; opacity: .95; }
.mini { position: absolute; left: 65px; top: 69px; width: 28px; height: 28px; }
.alias { position: absolute; left: 8px; top: 86px; }
.badge {
  position: absolute; left: 66px; top: 8px; width: 36px; height: 36px; border-radius: 50%;
  background: #e0503f; color: #fff; font-size: 21px; line-height: 36px; text-align: center;
}
.calendar {
  display: flex; flex-direction: column; align-items: center; color: #fff;
  background: linear-gradient(#ed695d, #d9564b 23px, #f9f8f7 23px, #f1efed);
}
.month { font-size: 15px; font-weight: 600; line-height: 25px; height: 23px; letter-spacing: .2px; }
.day { color: #2c2c2c; font-size: 47px; font-weight: 300; line-height: 48px; letter-spacing: -2.500px; padding-right: 4px; }
.zoom {
  background: linear-gradient(210deg, #4a83ec, #275cf2 35%, #1d45c6);
  color: #fff; font-size: 22px; font-weight: 600; line-height: 73px; text-align: center; letter-spacing: -1.300px;
}
.prompt { font: bold 19px "DejaVu Sans Mono", monospace; fill: #fff; }
.log { font: 16px "DejaVu Sans Mono", monospace; letter-spacing: -.700px; fill: #f5d23e; }
.divider { width: 46px; flex: none; margin: 14px 0 14px; background: linear-gradient(#5b5c60, #5b5c60) center / 2px 100% no-repeat; }
```
